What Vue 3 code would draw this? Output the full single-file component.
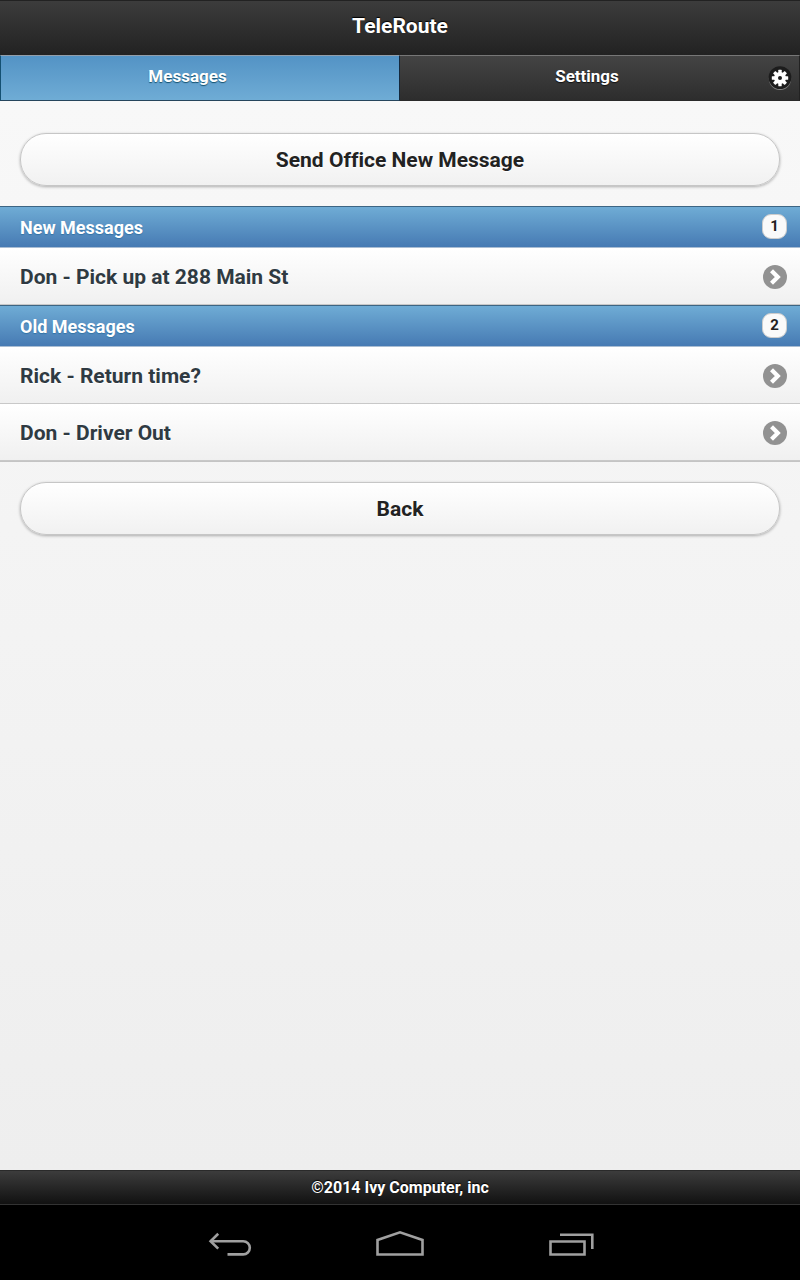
<script setup>
const sections = [
  { title: 'New Messages', items: ['Don - Pick up at 288 Main St'] },
  { title: 'Old Messages', items: ['Rick - Return time?', 'Don - Driver Out'] },
]
</script>

<template>
  <div class="page">
    <header class="header">
      <h1>TeleRoute</h1>
    </header>
    <nav class="tabs">
      <a href="#messages" class="tab active" aria-current="page">Messages</a>
      <a href="#settings" class="tab">
        Settings
        <svg class="gear" viewBox="0 0 24 24" width="24" height="24" aria-hidden="true">
          <circle cx="12" cy="12.8" r="11.2" fill="#858585" />
          <circle cx="12" cy="11.6" r="11.4" fill="#1c1c1c" />
          <g fill="#fff">
            <circle cx="12" cy="12" r="6" />
            <rect v-for="n in 4" :key="n" x="10.3" y="3.8" width="3.4" height="16.4" rx="0.5" :transform="`rotate(${n * 45} 12 12)`" />
          </g>
          <circle cx="12" cy="12" r="2" fill="#1c1c1c" />
        </svg>
      </a>
    </nav>

    <main class="content">
      <button type="button" class="pill">Send Office New Message</button>
      <div class="lists">
        <section v-for="section in sections" :key="section.title">
          <h2 class="divider">
            {{ section.title }}
            <span class="count">{{ section.items.length }}</span>
          </h2>
          <ul>
            <li v-for="item in section.items" :key="item">
              <a href="#message" class="row">
                {{ item }}
                <svg viewBox="0 0 24 24" width="24" height="24" aria-hidden="true">
                  <circle cx="12" cy="12" r="12" fill="#929292" />
                  <path d="M10 7.2L14.8 12L10 16.8" fill="none" stroke="#fff" stroke-width="4.2" stroke-linecap="square" />
                </svg>
              </a>
            </li>
          </ul>
        </section>
      </div>
      <button type="button" class="pill">Back</button>
    </main>

    <footer class="footer">©2014 Ivy Computer, inc</footer>
    <nav class="system" aria-label="System">
      <button type="button" aria-label="Back">
        <svg viewBox="0 0 48 30" width="48" height="30">
          <path d="M6 11.2H38.2A6.6 6.6 0 0 1 38.2 24.4H22.5" />
          <path d="M13.2 3.8L5.6 11.2L13.2 18.6" />
        </svg>
      </button>
      <button type="button" aria-label="Home">
        <svg viewBox="0 0 48 30" width="48" height="30">
          <path d="M1.5 24.5V10L24 2.3L46.5 10V24.5Z" />
        </svg>
      </button>
      <button type="button" aria-label="Recent apps">
        <svg viewBox="0 0 48 30" width="48" height="30">
          <path d="M3.5 11.5H37.5V24.5H3.5ZM13 4.8H45.3V19" />
        </svg>
      </button>
    </nav>
  </div>
</template>

<style>
body {
  margin: 0;
  background: #000;
}
</style>

<style scoped>
.page {
  min-height: 100vh;
  display: flex;
  flex-direction: column;
  font-family: Roboto, "Liberation Sans", sans-serif;
  font-weight: 700;
  font-variant-ligatures: none;
}
.page * {
  box-sizing: border-box;
}
h1,
h2,
ul {
  margin: 0;
  padding: 0;
  list-style: none;
  font-weight: 700;
}
a {
  text-decoration: none;
}
.header {
  height: 55px;
  padding-bottom: 5px;
  display: flex;
  align-items: center;
  justify-content: center;
  border-top: 1px solid #222;
  background: linear-gradient(#3c3c3c, #222);
  color: #fff;
  text-shadow: 0 -1px 1px #000;
}
h1 {
  font-size: 21px;
  line-height: 24px;
}
.tabs {
  display: grid;
  grid-template-columns: 1fr 1fr;
}
.tab {
  position: relative;
  height: 46px;
  padding: 0 25px 4px 0;
  display: flex;
  align-items: center;
  justify-content: center;
  border-top: 1px solid #777;
  border-bottom: 1px solid #2a2a2a;
  border-right: 1px solid #222;
  background: linear-gradient(#444, #2d2d2d);
  color: #fff;
  font-size: 17px;
  line-height: 20px;
  text-shadow: 0 1px 1px #111;
}
.tab.active {
  border-color: #929eaa #14283c #26455c #145072;
  border-left: 1px solid #145072;
  background: linear-gradient(#5393c5, #6facd5);
  text-shadow: 0 1px 1px #14506e;
}
.gear {
  position: absolute;
  right: 7px;
  top: 10px;
}
.content {
  flex: 1;
  padding: 32px 0;
  background: linear-gradient(#f8f8f8, #eee);
}
.pill {
  display: block;
  width: calc(100% - 40px);
  height: 53px;
  margin: 0 20px;
  padding: 0;
  border: 1px solid #c6c6c6;
  border-radius: 26px;
  background: linear-gradient(#fff, #f1f1f1);
  box-shadow: 0 1px 3px rgba(0, 0, 0, 0.3);
  color: #222;
  font: inherit;
  font-size: 21px;
  font-variant-ligatures: none;
  text-shadow: 0 1px 0 #fff;
}
.lists {
  margin: 20px 0;
  border-bottom: 1px solid #c4c4c4;
}
.divider {
  height: 42px;
  padding: 1px 13px 0 20px;
  display: flex;
  align-items: center;
  justify-content: space-between;
  border-top: 1px solid #3d6583;
  border-bottom: 1px solid #a9bdd3;
  background: linear-gradient(#6facd5, #467ab3);
  color: #fff;
  font-size: 18px;
  line-height: 22px;
  text-shadow: 0 1px 1px #3373a5;
}
.count {
  min-width: 25px;
  height: 25px;
  margin-bottom: 3px;
  border: 1px solid #ccc;
  border-radius: 9px;
  background: #fafafa;
  color: #222;
  font-size: 15px;
  text-align: center;
  text-shadow: none;
}
.row {
  height: 57px;
  padding: 2px 13px 0 20px;
  display: flex;
  align-items: center;
  justify-content: space-between;
  border-bottom: 1px solid #c8c8c8;
  background: linear-gradient(#fff, #f0f0f0);
  color: #2f3a42;
  font-size: 21px;
  line-height: 24px;
  text-shadow: 0 1px 0 #fff;
}
.footer {
  height: 35px;
  display: flex;
  align-items: center;
  justify-content: center;
  border-top: 1px solid #2a2a2a;
  border-bottom: 1px solid #333;
  background: linear-gradient(#3c3c3c, #111);
  color: #fff;
  font-size: 16px;
  line-height: 20px;
  text-shadow: 0 -1px 1px #000;
}
.system {
  height: 75px;
  padding-top: 4px;
  display: flex;
  align-items: center;
  justify-content: center;
  background: #000;
}
.system button {
  width: 171px;
  height: 48px;
  padding: 0;
  display: flex;
  align-items: center;
  justify-content: center;
  border: 0;
  background: none;
}
.system path {
  fill: none;
  stroke: #a0a0a0;
  stroke-width: 2.6;
}
</style>
